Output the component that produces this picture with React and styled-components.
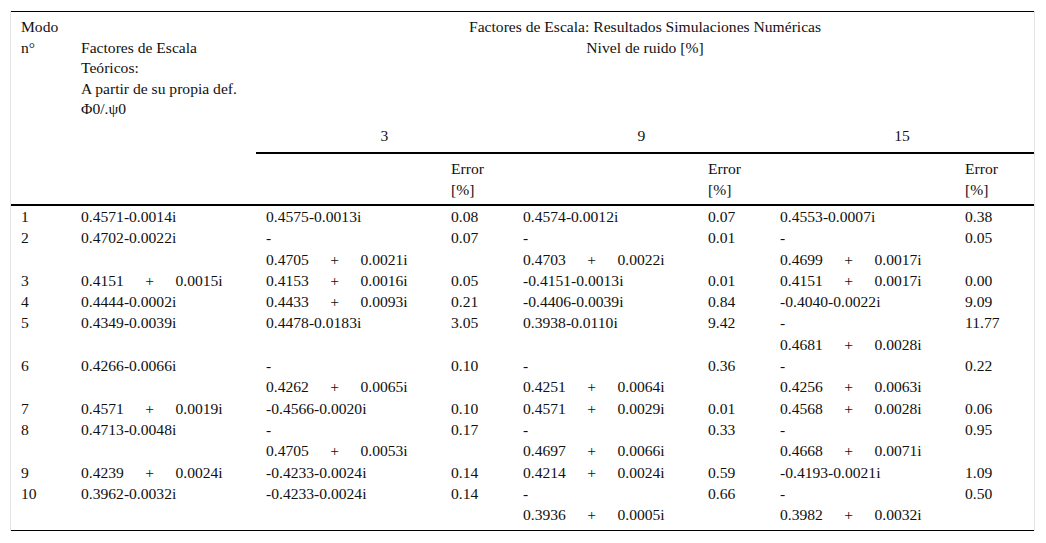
import React from "react";
import styled, { createGlobalStyle } from "styled-components";

const Page = createGlobalStyle`
  html, body {
    margin: 0;
    background: #fff;
  }
  body {
    font-family: "Liberation Serif", "Times New Roman", serif;
    font-size: 15.6px;
    color: #000;
  }
`;

const Frame = styled.div`
  margin: 11px 0 0 10px;
  width: 1023px;
  border-left: 1px solid #e4e4e4;
  border-right: 1px solid #e4e4e4;
`;

const Table = styled.table`
  width: 1023px;
  table-layout: fixed;
  border-collapse: separate;
  border-spacing: 0;
  border-top: 1px solid #000;
  border-bottom: 1px solid #000;
  font-family: "Liberation Serif", "Times New Roman", serif;
  font-size: 15.6px;
  line-height: 20.5px;
  color: #111;
`;

const HeadRow = styled.tr`
  height: ${(p) => p.$h}px;
`;

const HeadCell = styled.th`
  font-weight: 400;
  white-space: nowrap;
  text-align: ${(p) => p.$align || "left"};
  vertical-align: ${(p) => p.$valign || "top"};
  padding: ${(p) => (p.$valign === "middle" ? "0 10px 1px" : "5px 10px 0")};
  border-bottom: ${(p) => (p.$rule ? "2px solid #000" : "none")};
`;

const BodyRow = styled.tr`
  line-height: 21.3px;

  &:last-child td {
    padding-bottom: 5px;
  }
`;

const Cell = styled.td`
  padding: 0 10px;
  vertical-align: top;
  text-align: left;
  white-space: nowrap;
`;

const Complex = styled.span`
  word-spacing: 17.5px;
`;

const widths = [60, 185, 185, 72, 185, 72, 185, 79];

const rows = [
  ["1", "0.4571-0.0014i", "0.4575-0.0013i", "0.08", "0.4574-0.0012i", "0.07", "0.4553-0.0007i", "0.38"],
  ["2", "0.4702-0.0022i", "-|0.4705 + 0.0021i", "0.07", "-|0.4703 + 0.0022i", "0.01", "-|0.4699 + 0.0017i", "0.05"],
  ["3", "0.4151 + 0.0015i", "0.4153 + 0.0016i", "0.05", "-0.4151-0.0013i", "0.01", "0.4151 + 0.0017i", "0.00"],
  ["4", "0.4444-0.0002i", "0.4433 + 0.0093i", "0.21", "-0.4406-0.0039i", "0.84", "-0.4040-0.0022i", "9.09"],
  ["5", "0.4349-0.0039i", "0.4478-0.0183i", "3.05", "0.3938-0.0110i", "9.42", "-|0.4681 + 0.0028i", "11.77"],
  ["6", "0.4266-0.0066i", "-|0.4262 + 0.0065i", "0.10", "-|0.4251 + 0.0064i", "0.36", "-|0.4256 + 0.0063i", "0.22"],
  ["7", "0.4571 + 0.0019i", "-0.4566-0.0020i", "0.10", "0.4571 + 0.0029i", "0.01", "0.4568 + 0.0028i", "0.06"],
  ["8", "0.4713-0.0048i", "-|0.4705 + 0.0053i", "0.17", "-|0.4697 + 0.0066i", "0.33", "-|0.4668 + 0.0071i", "0.95"],
  ["9", "0.4239 + 0.0024i", "-0.4233-0.0024i", "0.14", "0.4214 + 0.0024i", "0.59", "-0.4193-0.0021i", "1.09"],
  ["10", "0.3962-0.0032i", "-0.4233-0.0024i", "0.14", "-|0.3936 + 0.0005i", "0.66", "-|0.3982 + 0.0032i", "0.50"],
];

// "-|a + b" means a lone minus on one line, the number on the next
const Value = ({ text }) => {
  const lines = text.split("|");
  return lines.map((line, i) => (
    <React.Fragment key={i}>
      {i > 0 && <br />}
      {line.includes(" + ") ? <Complex>{line}</Complex> : line}
    </React.Fragment>
  ));
};

const levels = ["3", "9", "15"];

export default function App() {
  return (
    <>
      <Page />
      <Frame>
        <Table>
          <colgroup>
            {widths.map((w, i) => (
              <col key={i} style={{ width: w }} />
            ))}
          </colgroup>
          <thead>
            <HeadRow $h={110}>
              <HeadCell rowSpan={3} $rule>
                Modo
                <br />
                n°
              </HeadCell>
              <HeadCell rowSpan={3} $rule>
                <br />
                Factores de Escala
                <br />
                Teóricos:
                <br />
                A partir de su propia def.
                <br />
                Φ0/.ψ0
              </HeadCell>
              <HeadCell colSpan={6} $align="center">
                Factores de Escala: Resultados Simulaciones Numéricas
                <br />
                Nivel de ruido [%]
              </HeadCell>
            </HeadRow>
            <HeadRow $h={32}>
              {levels.map((l) => (
                <HeadCell key={l} colSpan={2} $align="center" $valign="middle" $rule>
                  {l}
                </HeadCell>
              ))}
            </HeadRow>
            <HeadRow $h={52}>
              {levels.map((l) => (
                <React.Fragment key={l}>
                  <HeadCell $rule />
                  <HeadCell $rule>
                    Error
                    <br />
                    [%]
                  </HeadCell>
                </React.Fragment>
              ))}
            </HeadRow>
          </thead>
          <tbody>
            {rows.map((r) => (
              <BodyRow key={r[0]}>
                {r.map((v, i) => (
                  <Cell key={i}>
                    <Value text={v} />
                  </Cell>
                ))}
              </BodyRow>
            ))}
          </tbody>
        </Table>
      </Frame>
    </>
  );
}
